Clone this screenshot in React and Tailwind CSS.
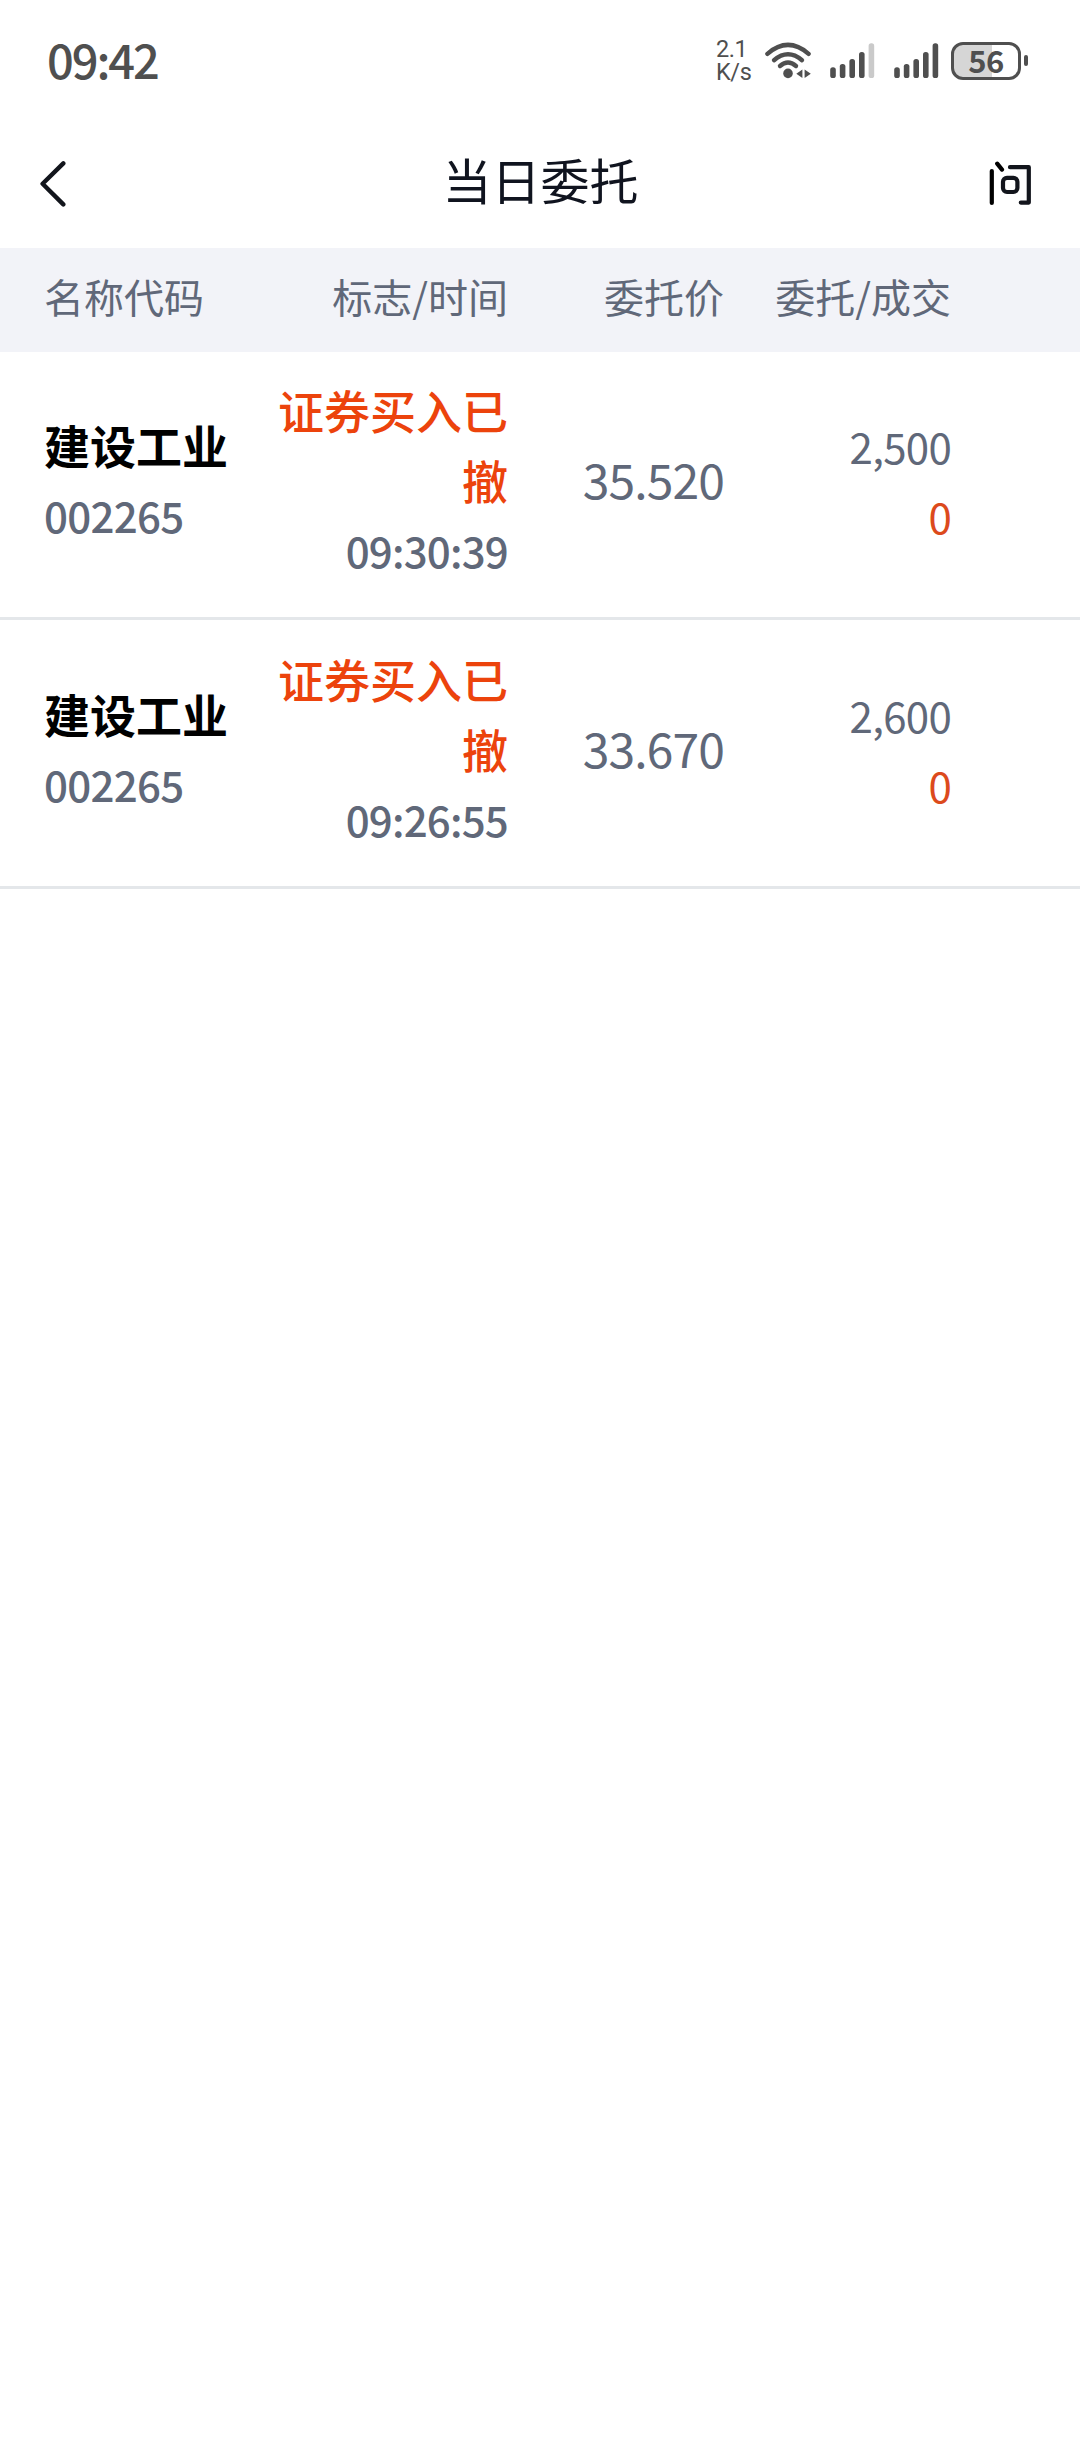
import React from 'react';

const orders = [
  { id: 1, name: '建设工业', code: '002265', status: '证券买入已撤', time: '09:30:39', price: '35.520', amount: '2,500', filled: '0' },
  { id: 2, name: '建设工业', code: '002265', status: '证券买入已撤', time: '09:26:55', price: '33.670', amount: '2,600', filled: '0' },
];

// x centre and top of each signal bar
const bars = [
  [3, 24.3],
  [12.6, 21],
  [22.2, 16],
  [31.8, 9],
  [41.4, 0.3],
];

const Signal = ({ level }) => (
  <svg width="45" height="36" viewBox="0 0 45 36">
    {bars.map(([x, y], idx) => (
      <rect key={idx} x={x - 2.8} y={y} width="5.6" height={35 - y} rx="2.6" fill={idx < level ? '#4f4f4f' : '#cacaca'} />
    ))}
  </svg>
);

const Wifi = () => (
  <svg width="48" height="40" viewBox="765 41 48 40" fill="none" stroke="#4f4f4f" strokeWidth="4.4" strokeLinecap="round">
    <path d="M767.4 53.8 Q788 36 808.6 53.8" />
    <path d="M774 60.2 Q788 48.4 802 60.2" />
    <path d="M780 66 Q788 59 796 66" />
    <circle cx="788" cy="73.4" r="4.8" fill="#4f4f4f" stroke="none" />
    <path d="M796.3 73.8 L802.4 69.6 V78 Z M804.6 69.6 L810.8 73.8 L804.6 78 Z" fill="#4f4f4f" stroke="none" />
  </svg>
);

const Battery = () => (
  <div className="flex items-center gap-[3px]">
    <div className="flex h-[38px] w-[70px] items-center justify-center rounded-[12px] border-[3px] border-[#4f4f4f] bg-linear-to-r from-[#d6d6d6] from-60% to-white to-60% pb-[2px] text-[31px] leading-none font-bold tracking-[-0.5px] text-[#4f4f4f]">
      56
    </div>
    <div className="h-[11px] w-[4px] rounded-full bg-[#4f4f4f]" />
  </div>
);

const StatusBar = () => (
  <div className="flex h-[122px] justify-between pr-[52px] pl-[47px] text-[#4f4f4f]">
    <div className="mt-[29px] text-[47px] leading-[60px] font-medium tracking-[-2.1px]">09:42</div>
    <div className="mt-[41px] flex h-[39px] items-center">
      <div className="mr-[14px] w-[35px] font-[Roboto] text-[23.5px] leading-[23px] tracking-[-0.4px]">
        2.1
        <br />
        K/s
      </div>
      <Wifi />
      <div className="ml-[17px]"><Signal level={4} /></div>
      <div className="mr-[12px] ml-[19px]"><Signal level={5} /></div>
      <Battery />
    </div>
  </div>
);

const TitleBar = () => (
  <div className="flex h-[126px] items-center justify-between pr-[48px] pl-[39px]">
    <svg width="48" height="48" viewBox="39 161 48 48" fill="none" stroke="#12151c" strokeWidth="4.4" strokeLinecap="round" strokeLinejoin="round">
      <path d="M63.3 163.4 L42.6 183.8 L63.3 204.4" />
    </svg>
    <h1 className="ml-[6px] pb-[13px] text-[49px] leading-[60px] text-[#10141f]">当日委托</h1>
    <svg width="44" height="48" viewBox="988 161 44 48" fill="none" stroke="#12151c" strokeWidth="4.2" strokeLinecap="round" strokeLinejoin="round" aria-label="问">
      <path d="M991.8 171 V203" stroke="#000" />
      <path d="M997.2 163.6 L1002 169.6" stroke="#000" />
      <path d="M1010 167.2 H1028.8 V202.6 H1020.8" />
      <rect x="1003" y="177.8" width="14.4" height="14.2" rx="4" />
    </svg>
  </div>
);

const OrderRow = ({ order }) => (
  <div className="grid h-[269px] grid-cols-[232px_232px_216px_227px] items-center border-b-[3px] border-[#e4e7ea] px-11 pb-[8px] text-right text-[#606879]">
    <div className="text-left">
      <div className="text-[46px] leading-[69px] font-bold text-black">{order.name}</div>
      <div className="text-[42px] leading-[71px] font-medium tracking-[-0.7px]">{order.code}</div>
    </div>
    <div className="pb-[2px]">
      <div className="text-[46px] leading-[70px] font-medium text-[#ec430c]">{order.status}</div>
      <div className="text-[42px] leading-[71px] font-medium tracking-[-0.8px]">{order.time}</div>
    </div>
    <div className="pb-[4px] text-[48px] leading-[70px] tracking-[-0.9px]">{order.price}</div>
    <div className="pt-[2px] text-[42px] leading-[70px] tracking-[-0.7px]">
      <div>{order.amount}</div>
      <div className="text-[#dc4a1c]">{order.filled}</div>
    </div>
  </div>
);

const App = () => {
  return (
    <div className="min-h-[2440px] w-[1080px] bg-white font-['Noto_Sans_CJK_SC',sans-serif]">
      <StatusBar />
      <TitleBar />
      <div className="grid h-[104px] grid-cols-[232px_232px_216px_227px] items-center bg-[#f2f3f8] px-11 pb-[8px] text-right text-[40px] text-[#606879]">
        <div className="text-left">名称代码</div>
        <div>标志/时间</div>
        <div>委托价</div>
        <div>委托/成交</div>
      </div>
      <div className="-mt-px">
        {orders.map((order) => (
          <OrderRow key={order.id} order={order} />
        ))}
      </div>
    </div>
  );
};

export default App;
